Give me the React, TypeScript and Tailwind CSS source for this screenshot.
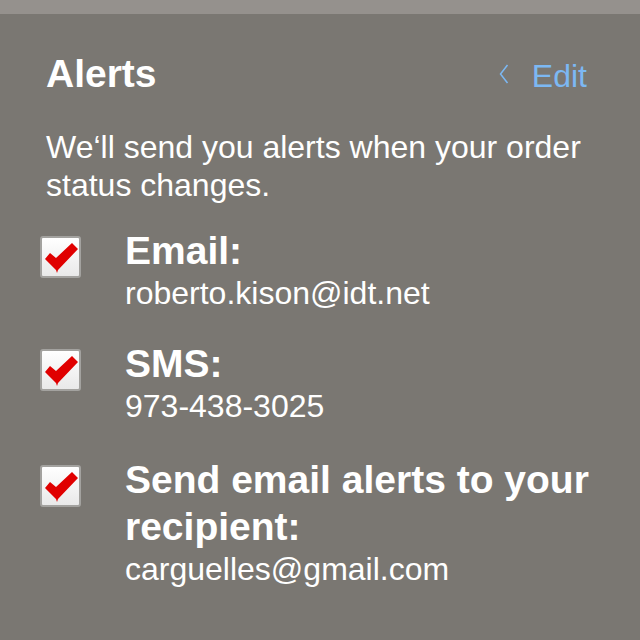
import React from 'react'

const CheckBox = ({ className }: { className?: string }) => (
  <div
    className={`h-[42px] w-[41px] shrink-0 rounded-[3px] border-2 border-[#a3a29f] bg-gradient-to-b from-white to-[#e9e9e9] ${className ?? ''}`}
  >
    <svg viewBox="0 0 37 38" className="h-full w-full">
      <polygon
        points="3,21 8,15 14,20 30,5 36,11 16,32 15,35 14,32"
        fill="#e00000"
      />
    </svg>
  </div>
)

type Row = { title: string; value: string; rowClass: string }

const rows: Row[] = [
  { title: 'Email:', value: 'roberto.kison@idt.net', rowClass: 'mt-[23px]' },
  { title: 'SMS:', value: '973-438-3025', rowClass: 'mt-[28px]' },
  { title: 'Send email alerts to your recipient:', value: 'carguelles@gmail.com', rowClass: 'mt-[31px]' },
]

export default function App() {
  return (
    <div className="h-[640px] w-[640px] overflow-hidden bg-[#7a7772] font-['Liberation_Sans',Arial,sans-serif] text-white">
      <div className="h-[14px] bg-[#95918d]" />

      <div className="mt-[36px] flex items-baseline justify-between pl-[46px] pr-[53px]">
        <h1 className="text-[39px] font-bold leading-[47px]">Alerts</h1>
        <button className="flex items-baseline gap-[23px] text-[32px] leading-[38px] text-[#7cb8f3]">
          <svg width="10" height="20" viewBox="0 0 10 20" className="-translate-y-[3px]">
            <path d="M8.5 1 L1.5 10 L8.5 19" fill="none" stroke="#7cb8f3" strokeWidth="1.5" />
          </svg>
          Edit
        </button>
      </div>

      <p className="mt-[31px] pl-[46px] pr-[50px] text-[32px] leading-[38px]">
        We‘ll send you alerts when your order status changes.
      </p>

      {rows.map((r) => (
        <div key={r.title} className={`flex items-start pl-[40px] pr-[20px] ${r.rowClass}`}>
          <CheckBox className="mt-[9px]" />
          <div className="ml-[44px] flex flex-col">
            <span className="text-[39px] font-bold leading-[47px]">{r.title}</span>
            <span className="text-[32px] leading-[38px]">{r.value}</span>
          </div>
        </div>
      ))}
    </div>
  )
}
